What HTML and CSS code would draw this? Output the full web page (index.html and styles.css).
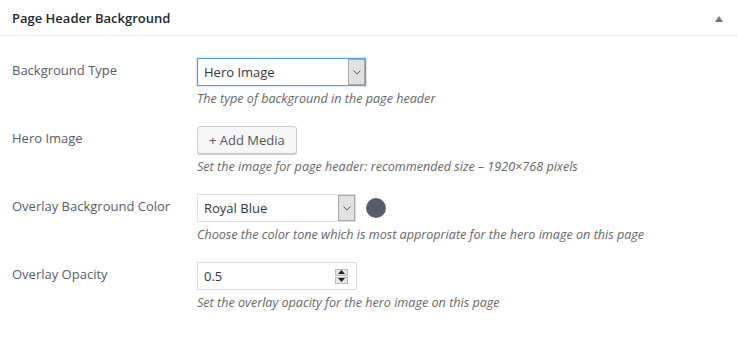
FILE: index.html
```html
<!DOCTYPE html>
<html lang="en">
<head>
    <meta charset="UTF-8">
    <meta name="viewport" content="width=device-width, initial-scale=1.0">
    <title>Page Header Background</title>
    <link rel="stylesheet" href="styles.css">
</head>
<body>

    <div class="postbox">
        <div class="postbox-header">
            <h2>Page Header Background</h2>
            <span class="toggle-arrow"></span>
        </div>

        <div class="inside">
            <div class="field">
                <label class="field-label">Background Type</label>
                <div class="field-control">
                    <div class="select focused">
                        <span class="select-value">Hero Image</span>
                        <span class="select-arrow">
                            <svg width="8" height="5" viewBox="0 0 8 5"><path d="M0.5 0.5 L4 4 L7.5 0.5" fill="none" stroke="#555" stroke-width="1"/></svg>
                        </span>
                    </div>
                    <p class="description">The type of background in the page header</p>
                </div>
            </div>

            <div class="field">
                <label class="field-label">Hero Image</label>
                <div class="field-control">
                    <button class="button" type="button">+ Add Media</button>
                    <p class="description">Set the image for page header: recommended size &ndash; 1920&times;768 pixels</p>
                </div>
            </div>

            <div class="field">
                <label class="field-label">Overlay Background Color</label>
                <div class="field-control">
                    <div class="control-row">
                        <div class="select color-select">
                            <span class="select-value">Royal Blue</span>
                            <span class="select-arrow">
                                <svg width="8" height="5" viewBox="0 0 8 5"><path d="M0.5 0.5 L4 4 L7.5 0.5" fill="none" stroke="#555" stroke-width="1"/></svg>
                            </span>
                        </div>
                        <span class="swatch"></span>
                    </div>
                    <p class="description">Choose the color tone which is most appropriate for the hero image on this page</p>
                </div>
            </div>

            <div class="field">
                <label class="field-label">Overlay Opacity</label>
                <div class="field-control">
                    <div class="number-input">
                        <span class="number-value">0.5</span>
                        <span class="spinner">
                            <span class="spin-btn"><svg width="7" height="4" viewBox="0 0 7 4"><path d="M0 4 L3.5 0 L7 4 Z" fill="#222"/></svg></span>
                            <span class="spin-btn"><svg width="7" height="4" viewBox="0 0 7 4"><path d="M0 0 L3.5 4 L7 0 Z" fill="#222"/></svg></span>
                        </span>
                    </div>
                    <p class="description">Set the overlay opacity for the hero image on this page</p>
                </div>
            </div>
        </div>
    </div>

</body>
</html>
```

FILE: styles.css
```css
body {
    margin: 0;
    padding: 0;
    background: #fff;
    font-family: "Open Sans", Arial, sans-serif;
    color: #444;
}

.postbox {
    background: #fff;
    width: 738px;
    height: 338px;
}

.postbox-header {
    display: flex;
    align-items: center;
    justify-content: space-between;
    height: 35px;
    padding: 0 15px 0 12px;
    border-bottom: 1px solid #eee;
}

.postbox-header h2 {
    margin: 0;
    font-size: 13px;
    font-weight: 600;
    color: #23282d;
}

/* small collapse triangle */
.toggle-arrow {
    width: 0;
    height: 0;
    border-left: 4px solid transparent;
    border-right: 4px solid transparent;
    border-bottom: 6px solid #72777c;
    margin-top: 2px;
}

.inside {
    padding-top: 22px;
}

.field {
    display: flex;
    padding: 0 12px 18px;
}

.field-label {
    width: 185px;
    flex-shrink: 0;
    font-size: 13px;
    line-height: 20px;
    padding-top: 2px;
    color: #555d66;
}

.field-control {
    display: flex;
    flex-direction: column;
    align-items: flex-start;
}

.control-row {
    display: flex;
    align-items: center;
    gap: 10px;
}

.select {
    display: flex;
    align-items: stretch;
    width: 169px;
    height: 28px;
    box-sizing: border-box;
    border: 1px solid #ddd;
    background: #fff;
}

.select.focused {
    border-color: #5b9dd9;
    box-shadow: 0 0 2px rgba(30, 140, 190, 0.5);
}

.color-select {
    width: 159px;
}

.select-value {
    flex: 1;
    padding-left: 6px;
    font-size: 13px;
    line-height: 26px;
    color: #32373c;
}

.select-arrow {
    width: 15px;
    display: flex;
    align-items: center;
    justify-content: center;
    background: #e1e1e1;
    border: 1px solid #a9a9a9;
}

.button {
    height: 28px;
    padding: 0 11px;
    border: 1px solid #ccc;
    border-radius: 3px;
    background: #f7f7f7;
    box-shadow: 0 1px 0 #ccc;
    font-family: "Open Sans", Arial, sans-serif;
    font-size: 13px;
    color: #555;
    cursor: pointer;
}

.swatch {
    width: 20px;
    height: 20px;
    border-radius: 50%;
    background: #565e6c;
}

.number-input {
    display: flex;
    align-items: center;
    width: 160px;
    height: 28px;
    box-sizing: border-box;
    border: 1px solid #ddd;
    padding: 0 8px 0 6px;
}

.number-value {
    flex: 1;
    font-size: 13px;
    color: #32373c;
}

.spinner {
    display: flex;
    flex-direction: column;
    gap: 1px;
}

.spin-btn {
    width: 13px;
    height: 7px;
    display: flex;
    align-items: center;
    justify-content: center;
    background: #e6e6e6;
    border: 1px solid #bbb;
    box-sizing: border-box;
}

.description {
    margin: 4px 0 0;
    font-size: 12.6px;
    line-height: 18px;
    font-style: italic;
    color: #666;
}
```
